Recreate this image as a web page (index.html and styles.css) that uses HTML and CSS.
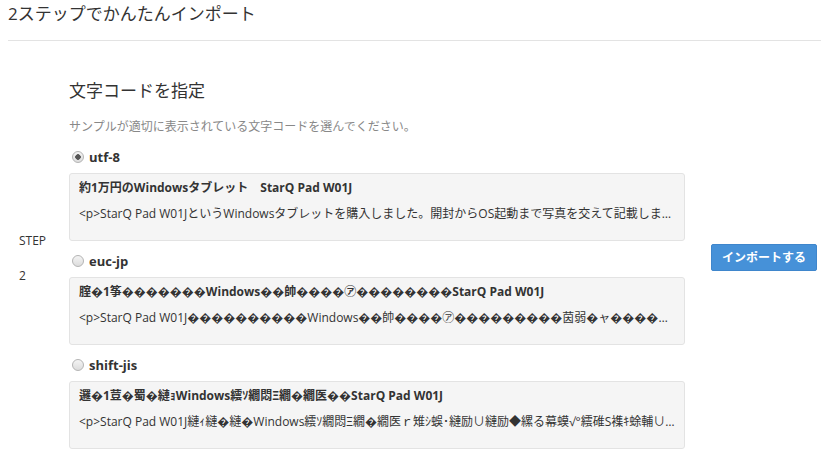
FILE: index.html
```html
<!DOCTYPE html>
<html lang="ja">
<head>
  <meta charset="UTF-8">
  <title>インポート</title>
  <link rel="stylesheet" href="styles.css">
</head>
<body>

  <h2 class="page-title">2ステップでかんたんインポート</h2>
  <hr class="divider">

  <div class="step-row">
    <div class="step-label">
      <p>STEP</p>
      <p>2</p>
    </div>

    <div class="step-body">
      <h3>文字コードを指定</h3>
      <p class="help">サンプルが適切に表示されている文字コードを選んでください。</p>

      <label class="enc">
        <input type="radio" name="encoding" value="utf-8" checked>
        <span>utf-8</span>
      </label>
      <div class="sample">
        <div class="sample-title">約1万円のWindowsタブレット　StarQ Pad W01J</div>
        <div class="sample-text">&lt;p&gt;StarQ Pad W01JというWindowsタブレットを購入しました。開封からOS起動まで写真を交えて記載します。外観やスペックなど</div>
      </div>

      <label class="enc">
        <input type="radio" name="encoding" value="euc-jp">
        <span>euc-jp</span>
      </label>
      <div class="sample">
        <div class="sample-title">腟�1筝�������Windows��帥����㋐��������StarQ Pad W01J</div>
        <div class="sample-text">&lt;p&gt;StarQ Pad W01J����������Windows��帥����㋐���������茵弱�ャ����障��������������</div>
      </div>

      <label class="enc">
        <input type="radio" name="encoding" value="shift-jis">
        <span>shift-jis</span>
      </label>
      <div class="sample">
        <div class="sample-title">邏�1荳�蜀�縺ｮWindows繧ｿ繝悶Ξ繝�繝医��StarQ Pad W01J</div>
        <div class="sample-text">&lt;p&gt;StarQ Pad W01J縺ｨ縺�縺�Windows繧ｿ繝悶Ξ繝�繝医ｒ雉ｼ蜈･縺励∪縺励◆縲る幕蟆√°繧碓S襍ｷ蜍輔∪縺ｧ蜀咏悄繧</div>
      </div>
    </div>

    <div class="step-action">
      <button class="btn-import">インポートする</button>
    </div>
  </div>

</body>
</html>
```

FILE: styles.css
```css
body {
  margin: 0;
  padding: 0 0 0 8px;
  font-family: "Open Sans", "Noto Sans CJK JP", sans-serif;
  color: #333;
  background: #fff;
}

.page-title {
  margin: 0;
  padding-top: 3px;
  font-size: 17px;
  font-weight: normal;
  line-height: 22px;
}

.divider {
  margin: 15px 0 0 0;
  border: 0;
  border-top: 1px solid #e3e3e3;
}

.step-row {
  display: grid;
  grid-template-columns: 61px 616px auto;
  align-items: center;
  padding-top: 38px;
}

.step-label {
  padding: 0 0 12px 11px;
  font-size: 12px;
}

.step-label p {
  margin: 0;
  line-height: 35px;
}

.step-body h3 {
  margin: 0;
  font-size: 17px;
  font-weight: normal;
  line-height: 24px;
}

.help {
  margin: 16px 0 0 0;
  font-size: 12px;
  line-height: 16px;
  color: #888;
}

.enc {
  display: flex;
  align-items: center;
  margin-top: 10px;
  padding-left: 3px;
  height: 20px;
  font-size: 13px;
  font-weight: bold;
}

.step-body .help + .enc {
  margin-top: 12px;
}

.enc input {
  appearance: none;
  margin: 0 5px 0 0;
  width: 12px;
  height: 12px;
  border: 1px solid #b4b4b4;
  border-radius: 50%;
  background: linear-gradient(#f4f4f4, #dcdcdc);
}

.enc input:checked {
  background: radial-gradient(circle, #555 0 2.5px, transparent 3px), linear-gradient(#f4f4f4, #dcdcdc);
}

.sample {
  margin-top: 6px;
  padding: 6px 9px 18px 9px;
  background: #f5f5f5;
  border: 1px solid #e3e3e3;
  border-radius: 3px;
  font-size: 12px;
}

.sample-title {
  font-weight: bold;
  line-height: 16px;
  white-space: nowrap;
  overflow: hidden;
}

.sample-text {
  margin-top: 10px;
  line-height: 16px;
  white-space: nowrap;
  overflow: hidden;
  text-overflow: ellipsis;
}

.step-action {
  padding: 0 0 14px 26px;
}

.btn-import {
  width: 106px;
  height: 27px;
  padding: 0;
  background: #4691d8;
  border: 1px solid #3f86cc;
  border-radius: 2px;
  color: #fff;
  font-family: inherit;
  font-size: 12px;
  font-weight: bold;
  cursor: pointer;
}
```
